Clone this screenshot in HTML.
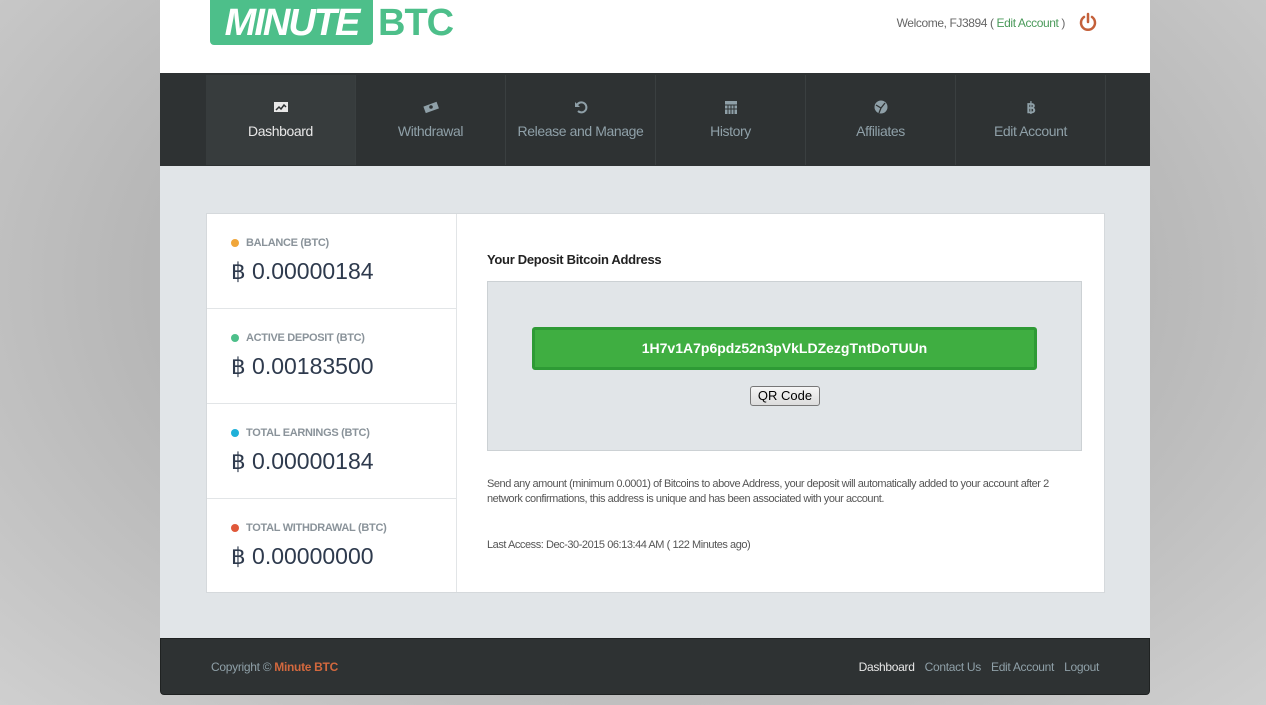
<!DOCTYPE html>
<html><head><meta charset="utf-8"><style>
*{margin:0;padding:0;box-sizing:border-box}
body{width:1266px;height:705px;overflow:hidden;font-family:"Liberation Sans",sans-serif;background:radial-gradient(ellipse at 50% 40%,#a8a8a8 0%,#b4b4b4 50%,#cfcfcf 100%);position:relative}
.wrap{position:absolute;left:160px;top:0;width:990px;height:695px}
.hdr{height:73px;background:#fff;position:relative}
.logo{position:absolute;left:50px;top:0;height:46px}
.logo .box{position:absolute;left:0;top:0;width:163px;background:#4dbf8a;color:#fff;font:italic 900 38px "Liberation Sans",sans-serif;height:45px;line-height:46px;border-radius:0 0 4px 4px;letter-spacing:-2px;text-align:center;transform-origin:left}
.logo .btc{position:absolute;left:168px;top:0;width:76px;color:#4dbf8a;font:900 38px "Liberation Sans",sans-serif;line-height:46px;letter-spacing:-1px}
.welcome{position:absolute;right:85px;top:16px;font-size:12px;color:#666;letter-spacing:-0.4px}
.welcome span{color:#4a9a5a}
.power{position:absolute;right:52px;top:12px}
.nav{height:93px;background:#2e3233;position:relative}
.nav .it{position:absolute;top:2px;width:150px;height:90px;border-right:1px solid #3a3f40;text-align:center;color:#8fa0a8;font-size:14px;letter-spacing:-0.4px}
.nav .it.act{background:#373c3d;color:#e8e8e8}
.nav .it svg{display:block;margin:25px auto 9px}
.content{height:472px;background:#e1e5e8;position:relative}
.card{position:absolute;left:46px;top:47px;width:899px;height:380px;background:#fff;border:1px solid #d5d9dc}
.left{position:absolute;left:0;top:0;width:250px;height:378px;border-right:1px solid #e2e5e7}
.row{height:95px;border-bottom:1px solid #e2e5e7;padding:23px 0 0 24px}
.row:last-child{border-bottom:none}
.lab{font-size:11px;font-weight:bold;color:#8a939a;display:flex;align-items:center;letter-spacing:-0.3px}
.lab i{width:8px;height:8px;border-radius:50%;display:inline-block;margin-right:7px}
.val{font-size:23px;color:#2e3a4d;margin-top:9px}
.right{position:absolute;left:280px;top:0;width:595px}
.title{margin-top:38px;font-size:13px;font-weight:bold;color:#222;letter-spacing:-0.3px}
.addrbox{margin-top:14px;height:170px;background:#e1e5e8;border:1px solid #ccd1d4;position:relative}
.addr{position:absolute;left:44px;top:45px;width:505px;height:43px;background:#3fae41;border:3px solid #2e9a35;border-radius:3px;color:#fff;font-weight:bold;font-size:14px;text-align:center;line-height:37px}
.qr{position:absolute;left:262px;top:104px;width:70px;height:20px;background:linear-gradient(#f6f6f6,#dcdcdc);border:1px solid #777;border-radius:3px;font-size:13px;text-align:center;line-height:18px;color:#000}
.note{margin-top:26px;font-size:11px;color:#555;line-height:15px;letter-spacing:-0.45px}
.last{margin-top:32px;font-size:11px;color:#555;letter-spacing:-0.45px}
.foot{height:57px;background:#2e3233;border-radius:0 0 4px 4px;border:1px solid #1f2222;position:relative;font-size:12px;letter-spacing:-0.3px}
.copy{position:absolute;left:50px;top:21px;color:#8fa0a8}
.copy b{color:#d2683e}
.flinks{position:absolute;right:50px;top:21px;color:#8fa0a8}
.flinks span{margin-left:10px}
</style></head><body>
<div class="wrap">
<div class="hdr">
<div class="logo"><div class="box">MINUTE</div><div class="btc">BTC</div></div>
<div class="welcome">Welcome, FJ3894 ( <span>Edit Account</span> )</div>
<svg class="power" width="20" height="20" viewBox="0 0 20 20"><path d="M6 5A7 7 0 1 0 14 5" fill="none" stroke="#c4603a" stroke-width="2.5" stroke-linecap="round"/><line x1="10" y1="2" x2="10" y2="10" stroke="#c4603a" stroke-width="2.5" stroke-linecap="round"/></svg>
</div>
<div class="nav">
<div class="it act" style="left:46px"><svg width="16" height="14"><rect x="1" y="2" width="14" height="10" fill="#e8e8e8"/><path d="M3 10l3-3 2 2 3-4 2 2" stroke="#2e3233" stroke-width="1.5" fill="none"/></svg>Dashboard</div>
<div class="it" style="left:196px"><svg width="18" height="14"><rect x="2" y="4" width="14" height="7" fill="#8fa0a8" transform="rotate(-20 9 7)"/><circle cx="9" cy="7" r="1.8" fill="#2e3233"/></svg>Withdrawal</div>
<div class="it" style="left:346px"><svg width="16" height="14"><path d="M4 5a5 5 0 1 1 1 6" fill="none" stroke="#8fa0a8" stroke-width="2"/><path d="M2 2v5h5z" fill="#8fa0a8"/></svg>Release and Manage</div>
<div class="it" style="left:496px"><svg width="16" height="14"><rect x="2" y="1" width="12" height="13" fill="#8fa0a8"/><path d="M2 5h12M5 5v9M8 5v9M11 5v9M2 9h12" stroke="#2e3233"/></svg>History</div>
<div class="it" style="left:646px"><svg width="16" height="14"><circle cx="8" cy="7" r="6.5" fill="#8fa0a8"/><path d="M3 5l5 3 4-5M6 13l2-5" stroke="#2e3233" stroke-width="1.3" fill="none"/></svg>Affiliates</div>
<div class="it" style="left:796px"><svg width="16" height="14"><text x="8" y="13" text-anchor="middle" font-family="Liberation Sans" font-weight="bold" font-size="15" fill="#8fa0a8">฿</text></svg>Edit Account</div>
</div>
<div class="content">
<div class="card">
<div class="left">
<div class="row"><div class="lab"><i style="background:#f0a63a"></i>BALANCE (BTC)</div><div class="val">฿ 0.00000184</div></div>
<div class="row"><div class="lab"><i style="background:#4dbf8a"></i>ACTIVE DEPOSIT (BTC)</div><div class="val">฿ 0.00183500</div></div>
<div class="row"><div class="lab"><i style="background:#1fb0d8"></i>TOTAL EARNINGS (BTC)</div><div class="val">฿ 0.00000184</div></div>
<div class="row"><div class="lab"><i style="background:#e0583a"></i>TOTAL WITHDRAWAL (BTC)</div><div class="val">฿ 0.00000000</div></div>
</div>
<div class="right">
<div class="title">Your Deposit Bitcoin Address</div>
<div class="addrbox"><div class="addr">1H7v1A7p6pdz52n3pVkLDZezgTntDoTUUn</div><div class="qr">QR Code</div></div>
<div class="note">Send any amount (minimum 0.0001) of Bitcoins to above Address, your deposit will automatically added to your account after 2 network confirmations, this address is unique and has been associated with your account.</div>
<div class="last">Last Access: Dec-30-2015 06:13:44 AM ( 122 Minutes ago)</div>
</div>
</div>
</div>
<div class="foot">
<div class="copy">Copyright © <b>Minute BTC</b></div>
<div class="flinks"><span style="color:#e8e8e8">Dashboard</span><span>Contact Us</span><span>Edit Account</span><span>Logout</span></div>
</div>
</div>
</body></html>
